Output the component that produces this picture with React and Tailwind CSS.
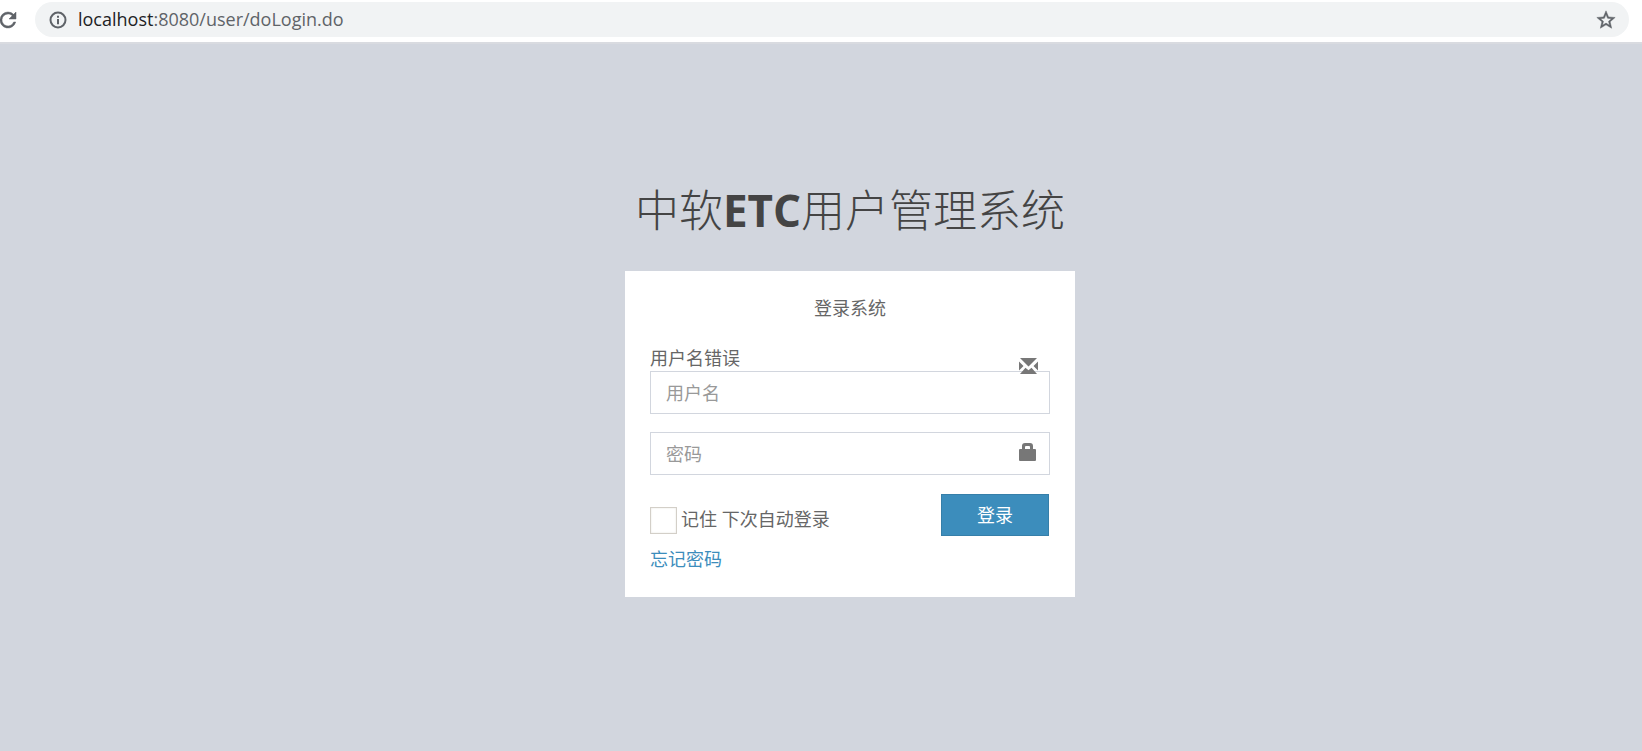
import { useState } from "react";

function ReloadIcon() {
  return (
    <svg viewBox="0 0 24 24" className="size-6" fill="#5f6368" stroke="#5f6368" strokeWidth="0.5">
      <path d="M17.65 6.35A7.96 7.96 0 0 0 12 4a8 8 0 1 0 7.73 10h-2.08A6 6 0 1 1 12 6c1.66 0 3.14.69 4.22 1.78L13 11h7V4l-2.35 2.35z" />
    </svg>
  );
}

function InfoIcon() {
  return (
    <svg viewBox="0 0 24 24" className="size-5" fill="#5f6368">
      <path d="M10.8 10.8h2.4v6.4h-2.4zM10.8 6.8h2.4v2.4h-2.4z" />
      <circle cx="12" cy="12" r="9" fill="none" stroke="#5f6368" strokeWidth="2.4" />
    </svg>
  );
}

function StarIcon() {
  return (
    <svg viewBox="0 0 24 24" className="size-[22px]" fill="#5f6368" stroke="#5f6368" strokeWidth="0.5">
      <path d="M22 9.24l-7.19-.62L12 2 9.19 8.63 2 9.24l5.46 4.73L5.82 21 12 17.27 18.18 21l-1.63-7.03L22 9.24zM12 15.4l-3.76 2.27 1-4.28-3.32-2.88 4.38-.38L12 6.1l1.71 4.04 4.38.38-3.32 2.88 1 4.28L12 15.4z" />
    </svg>
  );
}

function EnvelopeIcon() {
  return (
    <svg viewBox="0 0 19 16" className="h-4 w-[19px]" fill="#777777">
      <path d="M1 0h17L9.5 8.5zM0 3.5L4.5 8 0 12.5zM19 3.5L14.5 8l4.5 4.5zM1 16l5.5-6.2 3 2.5 3-2.5L18 16z" />
    </svg>
  );
}

function LockIcon() {
  return (
    <svg viewBox="0 0 17 18" className="h-[18px] w-[17px]" fill="#777777">
      <path d="M3 6V3q0-3 3-3h5q3 0 3 3v3h2q1 0 1 1v10q0 1-1 1H1q-1 0-1-1V7q0-1 1-1zM6 6h5V4q0-1-1-1H7Q6 3 6 4z" />
    </svg>
  );
}

function AddressBar() {
  return (
    <header className="flex h-11 items-start border-b-2 border-[#d9dbe0] bg-white pt-0.5 pr-[13px]">
      <button type="button" aria-label="重新加载" className="-ml-1 flex h-[35px] w-[39px] shrink-0 items-center">
        <ReloadIcon />
      </button>
      <div className="flex h-[35px] flex-1 items-center rounded-full bg-[#f1f3f4] pr-3 pl-[13px]">
        <InfoIcon />
        <div className="ml-2.5 flex-1 pb-0.5 text-lg leading-6 text-[#5f6368]">
          <span className="text-[#202124]">localhost</span>:8080/user/doLogin.do
        </div>
        <button type="button" aria-label="收藏">
          <StarIcon />
        </button>
      </div>
    </header>
  );
}

function Login() {
  const [username, setUsername] = useState("");
  const [password, setPassword] = useState("");
  const [remember, setRemember] = useState(false);

  const inputClass =
    "block h-[43px] w-full border border-[#d2d6de] bg-white pr-12 pl-[15px] text-lg text-[#555555] outline-none placeholder:text-[#999999] focus:border-[#3c8dbc]";

  return (
    <main className="flex flex-col items-center pt-[134px] pl-[58px]">
      <h1 className="mb-[29px] text-[44px] leading-16 font-light whitespace-nowrap text-[#444444]">
        中软<b className="font-bold">ETC</b>用户管理系统
      </h1>

      <form
        onSubmit={(e) => e.preventDefault()}
        className="w-[450px] bg-white p-[25px] text-lg leading-[25px] text-[#666666]"
      >
        <p className="mb-[25px] text-center">登录系统</p>

        <div className="relative mb-[18px]">
          <label htmlFor="username">用户名错误</label>
          <input
            id="username"
            type="text"
            placeholder="用户名"
            value={username}
            onChange={(e) => setUsername(e.target.value)}
            className={inputClass}
          />
          <span className="pointer-events-none absolute top-3 right-3">
            <EnvelopeIcon />
          </span>
        </div>

        <div className="relative mb-[19px]">
          <input
            type="password"
            aria-label="密码"
            placeholder="密码"
            value={password}
            onChange={(e) => setPassword(e.target.value)}
            className={inputClass}
          />
          <span className="pointer-events-none absolute top-[11px] right-3.5">
            <LockIcon />
          </span>
        </div>

        <div className="flex h-[53px] items-start justify-between pr-px">
          <label className="mt-[13px] flex items-start gap-1">
            <input
              type="checkbox"
              checked={remember}
              onChange={(e) => setRemember(e.target.checked)}
              className="size-[27px] appearance-none border border-[#d3cfc8] bg-white shadow-[inset_0_0_2px_#e5e2dd] checked:bg-[#3c8dbc]"
            />
            <span>记住 下次自动登录</span>
          </label>
          <button
            type="submit"
            className="h-[42px] w-[108px] border border-[#367fa9] bg-[#3c8dbc] text-white"
          >
            登录
          </button>
        </div>

        <a href="#" className="block w-fit text-[#3c8dbc]">
          忘记密码
        </a>
      </form>
    </main>
  );
}

function App() {
  return (
    <div className="min-h-screen bg-[#d2d6de] font-['Open_Sans','Noto_Sans_CJK_SC',sans-serif]">
      <AddressBar />
      <Login />
    </div>
  );
}

export default App;
